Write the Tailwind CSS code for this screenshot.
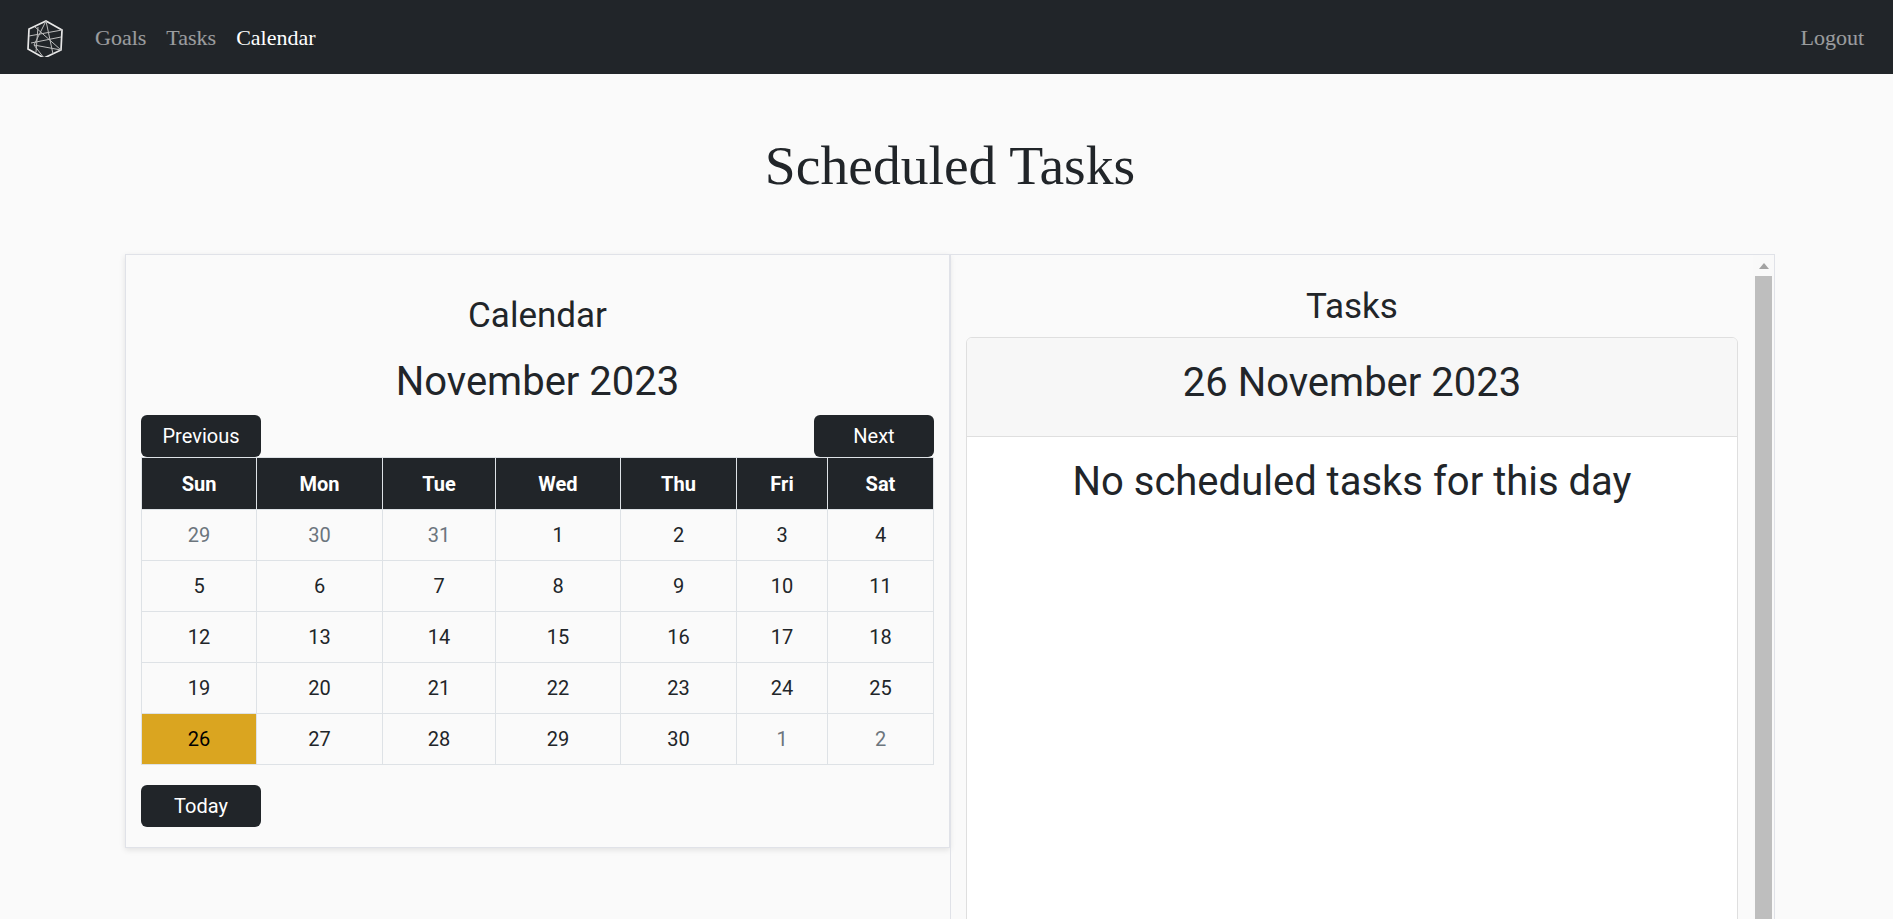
<!DOCTYPE html>
<html lang="en">
<head>
    <meta charset="UTF-8">
    <meta name="viewport" content="width=device-width, initial-scale=1.0">
    <title>Scheduled Tasks</title>
    <script src="https://cdn.jsdelivr.net/npm/@tailwindcss/browser@4"></script>
</head>
<body class="h-screen overflow-hidden bg-[#fafafa] text-[#212529] font-['Roboto',sans-serif]">

    <!-- Navbar -->
    <nav class="h-[74px] bg-[#212529] flex items-center pl-[27px] pr-[29px] font-['Liberation_Serif',serif] text-[22px]">
        <svg class="w-[36px] h-[40px] mr-[32px] shrink-0" viewBox="27 17 36 40" fill="none" stroke="#bdbdbd" stroke-width="1">
            <path stroke="#e8e8e8" stroke-width="1.7" d="M46 21 L62 30 L61 50 L44 58 L28 49 L29 29 Z"/>
            <path d="M46 21 L34 45 L44 58 M35 27 L61 50 M29 36 L62 30 M31 43 L61 37 M38 27 L36 52 M46 21 L53 54 M34 45 L61 50"/>
        </svg>
        <a class="text-white/55 mr-[20px]">Goals</a>
        <a class="text-white/55 mr-[20px]">Tasks</a>
        <a class="text-white">Calendar</a>
        <a class="text-white/55 ml-auto">Logout</a>
    </nav>

    <h1 class="mt-[61px] mb-[59px] pl-[7px] leading-[60px] text-center text-[55.6px] font-['Liberation_Serif',serif] text-[#212529]">Scheduled Tasks</h1>

    <div class="flex mx-[125px] items-start">
        <!-- Calendar card -->
        <section class="w-[825px] shrink-0 border border-[#e0e2e8] shadow-[0_2px_6px_rgba(0,0,0,0.1)] px-[15px] pt-[42px] pb-[20px]">
            <h3 class="text-[35px] leading-[38px] text-center">Calendar</h3>
            <h2 class="text-[40px] leading-[48px] text-center mt-[23px]">November 2023</h2>
            <div class="flex justify-between mt-[9px]">
                <button class="w-[120px] h-[42px] rounded-md bg-[#212529] text-white text-[20px]">Previous</button>
                <button class="w-[120px] h-[42px] rounded-md bg-[#212529] text-white text-[20px]">Next</button>
            </div>
            <table class="w-[792px] table-fixed border-collapse text-[20px] text-center">
                <thead class="bg-[#212529] text-white">
                    <tr class="h-[52px]">
                        <th class="w-[115px] border border-[#dee2e6] font-bold">Sun</th>
                        <th class="w-[126px] border border-[#dee2e6] font-bold">Mon</th>
                        <th class="w-[113px] border border-[#dee2e6] font-bold">Tue</th>
                        <th class="w-[125px] border border-[#dee2e6] font-bold">Wed</th>
                        <th class="w-[116px] border border-[#dee2e6] font-bold">Thu</th>
                        <th class="w-[91px] border border-[#dee2e6] font-bold">Fri</th>
                        <th class="w-[106px] border border-[#dee2e6] font-bold">Sat</th>
                    </tr>
                </thead>
                <tbody>
                    <tr class="h-[51px]">
                        <td class="border border-[#dee2e6] text-[#6c757d]">29</td>
                        <td class="border border-[#dee2e6] text-[#6c757d]">30</td>
                        <td class="border border-[#dee2e6] text-[#6c757d]">31</td>
                        <td class="border border-[#dee2e6]">1</td>
                        <td class="border border-[#dee2e6]">2</td>
                        <td class="border border-[#dee2e6]">3</td>
                        <td class="border border-[#dee2e6]">4</td>
                    </tr>
                    <tr class="h-[51px]">
                        <td class="border border-[#dee2e6]">5</td>
                        <td class="border border-[#dee2e6]">6</td>
                        <td class="border border-[#dee2e6]">7</td>
                        <td class="border border-[#dee2e6]">8</td>
                        <td class="border border-[#dee2e6]">9</td>
                        <td class="border border-[#dee2e6]">10</td>
                        <td class="border border-[#dee2e6]">11</td>
                    </tr>
                    <tr class="h-[51px]">
                        <td class="border border-[#dee2e6]">12</td>
                        <td class="border border-[#dee2e6]">13</td>
                        <td class="border border-[#dee2e6]">14</td>
                        <td class="border border-[#dee2e6]">15</td>
                        <td class="border border-[#dee2e6]">16</td>
                        <td class="border border-[#dee2e6]">17</td>
                        <td class="border border-[#dee2e6]">18</td>
                    </tr>
                    <tr class="h-[51px]">
                        <td class="border border-[#dee2e6]">19</td>
                        <td class="border border-[#dee2e6]">20</td>
                        <td class="border border-[#dee2e6]">21</td>
                        <td class="border border-[#dee2e6]">22</td>
                        <td class="border border-[#dee2e6]">23</td>
                        <td class="border border-[#dee2e6]">24</td>
                        <td class="border border-[#dee2e6]">25</td>
                    </tr>
                    <tr class="h-[51px]">
                        <td class="border border-[#dee2e6] bg-[#daa520] text-black">26</td>
                        <td class="border border-[#dee2e6]">27</td>
                        <td class="border border-[#dee2e6]">28</td>
                        <td class="border border-[#dee2e6]">29</td>
                        <td class="border border-[#dee2e6]">30</td>
                        <td class="border border-[#dee2e6] text-[#6c757d]">1</td>
                        <td class="border border-[#dee2e6] text-[#6c757d]">2</td>
                    </tr>
                </tbody>
            </table>
            <button class="block mt-[20px] w-[120px] h-[42px] rounded-md bg-[#212529] text-white text-[20px]">Today</button>
        </section>

        <!-- Tasks panel -->
        <section class="w-[825px] h-[800px] shrink-0 flex border border-[#e0e2e8]">
            <div class="flex-1 min-w-0 px-[15px] pt-[33px]">
                <h3 class="text-[35px] leading-[38px] text-center">Tasks</h3>
                <div class="mt-[11px] h-[700px] rounded-md border border-[#dfdfdf] bg-white overflow-hidden">
                    <div class="h-[99px] bg-[#f7f7f7] border-b border-[#dfdfdf] flex items-center justify-center text-[40px] pb-[9px]">26 November 2023</div>
                    <p class="pt-[21px] text-[40px] leading-[48px] text-center">No scheduled tasks for this day</p>
                </div>
            </div>
            <!-- scrollbar -->
            <div class="w-[21px] shrink-0 bg-[#f9f9f9] flex flex-col items-center">
                <div class="h-[21px] flex items-center justify-center">
                    <svg class="w-[10px] h-[6px]" viewBox="0 0 10 6"><path d="M5 0 L10 6 L0 6 Z" fill="#a3a3a3"/></svg>
                </div>
                <div class="w-[17px] flex-1 bg-[#bebebe]"></div>
            </div>
        </section>
    </div>
</body>
</html>
